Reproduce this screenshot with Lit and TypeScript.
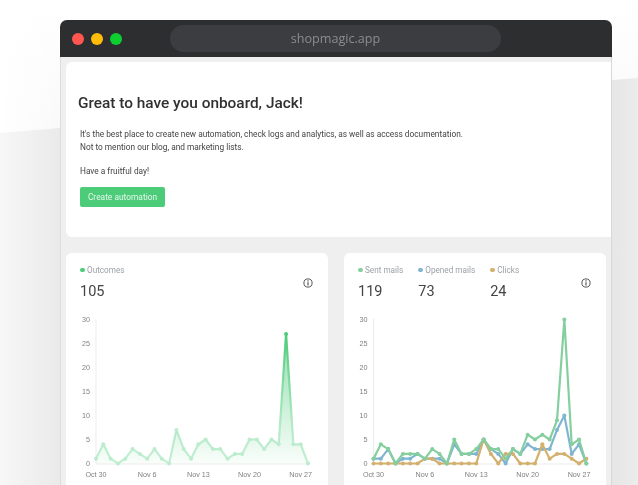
import { LitElement, html, css, svg } from 'lit';
import { customElement, property } from 'lit/decorators.js';

/** Pixel height of one unit on the value axis */
const UNIT = 4.8;
/** Baseline of the plot inside the chart svg */
const BASE_Y = 153.5;
const TICKS = [0, 5, 10, 15, 20, 25, 30];
const DATES = ['Oct 30', 'Nov 6', 'Nov 13', 'Nov 20', 'Nov 27'];

interface Series {
  name: string;
  color: string;
  values: number[];
}

const OUTCOMES: Series[] = [
  {
    name: 'Outcomes',
    color: '#4ccb79',
    values: [1, 4, 1, 0, 1, 3, 2, 1, 3, 1, 0, 7, 3, 1, 4, 5, 3, 3, 1, 2, 2, 5, 5, 3, 5, 4, 27, 4, 4, 0],
  },
];

const MAILS: Series[] = [
  {
    name: 'Opened mails',
    color: '#7fb5d1',
    values: [1, 1, 3, 0, 1, 1, 2, 1, 1, 1, 0, 4, 2, 2, 2, 5, 3, 2, 0, 3, 2, 4, 3, 3, 3, 7, 10, 2, 4, 0],
  },
  {
    name: 'Clicks',
    color: '#d4b06f',
    values: [0, 0, 0, 0, 0, 0, 0, 1, 1, 0, 0, 0, 0, 0, 0, 5, 2, 0, 2, 2, 0, 0, 0, 4, 1, 2, 2, 1, 0, 1],
  },
  {
    name: 'Sent mails',
    color: '#84cf9d',
    values: [1, 4, 3, 0, 2, 2, 2, 1, 3, 2, 0, 5, 2, 2, 3, 5, 3, 3, 1, 3, 2, 6, 5, 6, 5, 9, 30, 4, 5, 0],
  },
];

/** Line chart with day labels, drawn as inline svg */
@customElement('line-chart')
export class LineChart extends LitElement {
  @property({ type: Array })
  series: Series[] = [];

  /** Left edge of the plot, in svg pixels */
  @property({ type: Number })
  originX = 30;

  /** Distance between two days */
  @property({ type: Number })
  stepX = 7.31;

  /** Fill under the line and fade the stroke towards the baseline */
  @property({ type: Boolean })
  area = false;

  static override styles = css`
    :host {
      display: block;
    }

    svg {
      display: block;
      overflow: visible;
    }

    .tick {
      font: 7.2px 'Liberation Sans', Arial, sans-serif;
      fill: #808080;
    }

    .axis {
      stroke: #ebebeb;
      stroke-width: 1;
    }
  `;

  private point(value: number, index: number): [number, number] {
    return [this.originX + index * this.stepX, BASE_Y - value * UNIT];
  }

  private renderSeries(s: Series) {
    const points = s.values.map((v, i) => this.point(v, i));
    const line = points.map(([x, y]) => `${x},${y}`).join(' ');
    const stroke = this.area ? 'url(#stroke)' : s.color;
    const last = points[points.length - 1][0];
    return svg`
      ${this.area
        ? svg`<polygon points="${line} ${last},${BASE_Y} ${this.originX},${BASE_Y}" fill="url(#fill)" />`
        : ''}
      <polyline points=${line} fill="none" stroke=${stroke} stroke-width="2.2" stroke-linejoin="round" />
      ${points.map(([x, y]) => svg`<circle cx=${x} cy=${y} r="2" fill=${this.area ? this.dotColor(y) : s.color} />`)}
    `;
  }

  private dotColor(y: number): string {
    return y < 60 ? '#4ccb79' : '#bcecce';
  }

  override render() {
    const right = this.originX + this.stepX * 29;
    return html`
      <svg width="262" height="175" viewBox="0 0 262 175">
        <defs>
          <linearGradient id="fill" gradientUnits="userSpaceOnUse" x1="0" y1="24" x2="0" y2=${BASE_Y}>
            <stop offset="0" stop-color="#4ccb79" stop-opacity="0.62" />
            <stop offset="1" stop-color="#4ccb79" stop-opacity="0.03" />
          </linearGradient>
          <linearGradient id="stroke" gradientUnits="userSpaceOnUse" x1="0" y1="24" x2="0" y2=${BASE_Y}>
            <stop offset="0" stop-color="#4ccb79" />
            <stop offset="0.7" stop-color="#b4e9c7" />
            <stop offset="1" stop-color="#c3efd3" />
          </linearGradient>
        </defs>
        <line class="axis" x1=${this.originX} y1="9" x2=${this.originX} y2=${BASE_Y} />
        <line class="axis" x1=${this.originX} y1=${BASE_Y + 0.5} x2=${right} y2=${BASE_Y + 0.5} />
        ${TICKS.map(
          (t) => svg`<text class="tick" x=${this.originX - 6} y=${BASE_Y - t * UNIT + 2} text-anchor="end">${t}</text>`,
        )}
        ${DATES.map(
          (d, i) => svg`<text class="tick" x=${this.originX + i * 7 * this.stepX} y=${BASE_Y + 13} text-anchor="middle">${d}</text>`,
        )}
        ${this.series.map((s) => this.renderSeries(s))}
      </svg>
    `;
  }
}

/** Dashboard page shown inside a dark browser frame */
@customElement('app-root')
export class AppRoot extends LitElement {
  static override styles = css`
    :host {
      display: block;
      position: relative;
      width: 638px;
      height: 485px;
      overflow: hidden;
      background: #fff;
      font-family: Roboto, 'Liberation Sans', sans-serif;
    }

    .backdrop {
      position: absolute;
      inset: 0;
    }

    .window {
      position: relative;
      box-sizing: border-box;
      width: 552px;
      height: 465px;
      margin: 20px 0 0 60px;
      border-radius: 7px 7px 0 0;
      overflow: hidden;
      background: #efefef;
      filter: blur(0.45px);
    }

    .titlebar {
      display: flex;
      align-items: center;
      gap: 7px;
      height: 37px;
      padding-left: 12px;
      background: #2d2e30;
    }

    .light {
      width: 12px;
      height: 12px;
      border-radius: 50%;
    }

    .red {
      background: #ff5650;
    }

    .yellow {
      background: #ffbd0a;
    }

    .green {
      background: #0ecf32;
    }

    .url {
      display: flex;
      align-items: center;
      justify-content: center;
      width: 331px;
      height: 27px;
      margin-left: 41px;
      border-radius: 14px;
      background: #3c3d40;
      color: #8c8c8c;
      font: 12.6px 'Open Sans', sans-serif;
    }

    .content {
      display: flex;
      flex-direction: column;
      gap: 16px;
      height: 100%;
      box-sizing: border-box;
      padding: 5px 0 0 5px;
      border-left: 1px solid #dcdcdc;
      border-right: 1px solid #d8d8d8;
    }

    .welcome {
      box-sizing: border-box;
      height: 175px;
      padding: 31px 0 0 14px;
      border-radius: 6px 0 0 6px;
      background: #fff;
      color: #444;
    }

    h1 {
      margin: 0 0 15px -2px;
      font-size: 15.4px;
      line-height: 20px;
      font-weight: 500;
      color: #2f3032;
    }

    p {
      margin: 0 0 9px;
      font-size: 8.3px;
      line-height: 13.4px;
    }

    p + p {
      margin-top: 10px;
    }

    button {
      display: block;
      width: 85px;
      height: 20px;
      padding: 0;
      border: none;
      border-radius: 2px;
      background: #4ccb79;
      color: #e4f7ea;
      font: 8.4px Roboto, sans-serif;
    }

    .cards {
      display: flex;
      gap: 16px;
    }

    .card {
      box-sizing: border-box;
      width: 262px;
      height: 240px;
      padding-top: 11px;
      border-radius: 6px;
      background: #fff;
    }

    .head {
      display: flex;
      justify-content: space-between;
      align-items: center;
      padding: 0 15px 0 14px;
      margin-bottom: 8px;
    }

    .stats {
      display: flex;
      gap: 15px;
    }

    .label {
      display: flex;
      align-items: center;
      gap: 2.5px;
      height: 12px;
      font-size: 8.2px;
      color: #9ca1a8;
    }

    .dot {
      width: 4.5px;
      height: 4.5px;
      border-radius: 50%;
    }

    .value {
      margin-top: 6px;
      font-size: 14.5px;
      line-height: 20px;
      color: #444;
    }

    .info {
      display: block;
    }
  `;

  private renderStat(label: string, color: string, value: number) {
    return html`
      <div>
        <div class="label"><span class="dot" style="background:${color}"></span>${label}</div>
        <div class="value">${value}</div>
      </div>
    `;
  }

  private renderInfo() {
    return html`
      <svg class="info" width="10" height="10" viewBox="0 0 10 10" fill="none" stroke="#444" stroke-width="0.9">
        <circle cx="5" cy="5" r="4.1" />
        <path d="M5 4.3V7.6M5 2.3V3.4" stroke-width="1.1" />
      </svg>
    `;
  }

  override render() {
    return html`
      <svg class="backdrop" width="638" height="485" viewBox="0 0 638 485">
        <defs>
          <linearGradient id="sky" x1="0" y1="0" x2="0" y2="1">
            <stop offset="0" stop-color="#fff" />
            <stop offset="1" stop-color="#f9f9f9" />
          </linearGradient>
          <linearGradient id="fade" x1="0" y1="0" x2="1" y2="0">
            <stop offset="0" stop-color="#fff" />
            <stop offset="1" stop-color="#fff" stop-opacity="0" />
          </linearGradient>
          <linearGradient id="wave" x1="0" y1="0" x2="1" y2="0">
            <stop offset="0" stop-color="#f7f7f7" />
            <stop offset="0.094" stop-color="#eaeaea" />
            <stop offset="0.96" stop-color="#e6e6e6" />
            <stop offset="1" stop-color="#ececec" />
          </linearGradient>
        </defs>
        <rect width="638" height="135" fill="url(#sky)" />
        <rect width="60" height="135" fill="url(#fade)" />
        <path d="M0 133 L60 128 L612 80 L638 78 V485 H0 Z" fill="url(#wave)" />
      </svg>
      <div class="window">
        <div class="titlebar">
          <span class="light red"></span>
          <span class="light yellow"></span>
          <span class="light green"></span>
          <div class="url">shopmagic.app</div>
        </div>
        <div class="content">
          <section class="welcome">
            <h1>Great to have you onboard, Jack!</h1>
            <p>
              It's the best place to create new automation, check logs and analytics, as well as access documentation.<br />
              Not to mention our blog, and marketing lists.
            </p>
            <p>Have a fruitful day!</p>
            <button>Create automation</button>
          </section>
          <div class="cards">
            <section class="card">
              <div class="head">
                <div class="stats">${this.renderStat('Outcomes', '#4ccb79', 105)}</div>
                ${this.renderInfo()}
              </div>
              <line-chart .series=${OUTCOMES} .originX=${30} .stepX=${7.31} area></line-chart>
            </section>
            <section class="card">
              <div class="head">
                <div class="stats">
                  ${this.renderStat('Sent mails', '#84cf9d', 119)}
                  ${this.renderStat('Opened mails', '#7fb5d1', 73)}
                  ${this.renderStat('Clicks', '#d4b06f', 24)}
                </div>
                ${this.renderInfo()}
              </div>
              <line-chart .series=${MAILS} .originX=${29.5} .stepX=${7.34}></line-chart>
            </section>
          </div>
        </div>
      </div>
    `;
  }
}
